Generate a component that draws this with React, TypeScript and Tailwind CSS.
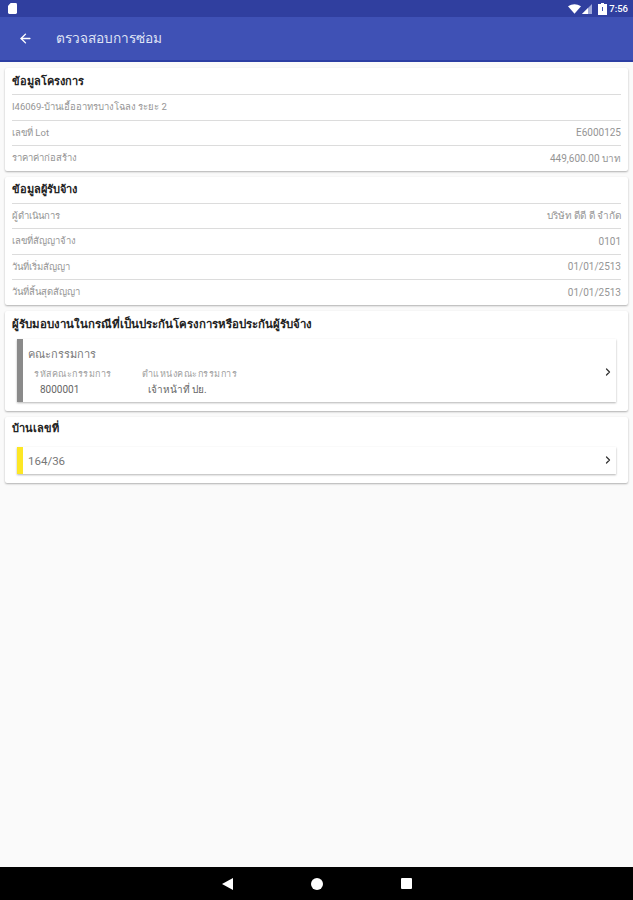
import React from "react";
import { ArrowLeft, ChevronRight } from "lucide-react";

const Row = ({ label, value }: { label: string; value?: string }) => (
  <div className="h-[25.5px] mx-[7px] flex items-center justify-between border-t border-[#dcdcdc] text-[9.5px] text-[#959595]">
    <span>{label}</span>
    {value && <span className="text-[10px]">{value}</span>}
  </div>
);

const Card = ({ title, rows }: { title: string; rows: { label: string; value?: string }[] }) => (
  <section className="mx-[5px] bg-white rounded-[2px] shadow-[0_1px_2px_rgba(0,0,0,0.3)]">
    <h2 className="h-[26px] pt-[2px] px-[7px] flex items-center text-[11px] font-bold text-[#222]">{title}</h2>
    {rows.map((r, idx) => (
      <Row key={idx} label={r.label} value={r.value} />
    ))}
  </section>
);

const App = () => {
  return (
    <div className="w-[633px] h-[900px] flex flex-col bg-[#fafafa] font-['Roboto','Noto_Sans',sans-serif] overflow-hidden">
      <div className="h-[17px] flex-none bg-[#303f9f] flex items-center justify-between pl-2 pr-[5px] text-white">
        <svg viewBox="0 0 10 12" className="w-[9px] h-[11px]" fill="currentColor">
          <path d="M3 0h5.5A1.5 1.5 0 0 1 10 1.5v9A1.5 1.5 0 0 1 8.5 12h-7A1.5 1.5 0 0 1 0 10.5V3z" />
        </svg>
        <div className="flex items-center">
          <svg viewBox="0 0 14 10" className="w-[13px] h-[10px]" fill="currentColor">
            <path d="M0 2 Q7 -2 14 2 L7 10z" />
          </svg>
          <svg viewBox="0 0 10 10" className="w-[10px] h-[10px] ml-[1px] mr-[6px]">
            <path fill="#9fa8da" d="M10 0v10H0z" />
            <path fill="#fff" d="M6 4v6H0z" />
          </svg>
          <svg viewBox="0 0 9 12" className="w-[9px] h-[12px] mr-[2px]">
            <path fill="#fff" d="M3 0h3v1h3v11H0V1h3z" />
            <path fill="#3f51b5" d="M4 4h1v4H4z" />
          </svg>
          <span className="text-[9.5px] font-medium leading-none">7:56</span>
        </div>
      </div>

      <header className="h-[45px] flex-none bg-[#3f51b5] border-b-2 border-[#2c3ea3] flex items-center text-white">
        <ArrowLeft className="w-[15px] h-[15px] ml-[18px]" strokeWidth={2.25} />
        <h1 className="ml-[23px] text-[13.7px] font-medium text-[#dfe3f5]">ตรวจสอบการซ่อม</h1>
      </header>

      <main className="flex-1 flex flex-col gap-[6px] pt-[6px]">
        <Card
          title="ข้อมูลโครงการ"
          rows={[
            { label: "I46069-บ้านเอื้ออาทรบางโฉลง ระยะ 2" },
            { label: "เลขที่ Lot", value: "E6000125" },
            { label: "ราคาค่าก่อสร้าง", value: "449,600.00 บาท" },
          ]}
        />
        <Card
          title="ข้อมูลผู้รับจ้าง"
          rows={[
            { label: "ผู้ดำเนินการ", value: "บริษัท ดีดี ดี จำกัด" },
            { label: "เลขที่สัญญาจ้าง", value: "0101" },
            { label: "วันที่เริ่มสัญญา", value: "01/01/2513" },
            { label: "วันที่สิ้นสุดสัญญา", value: "01/01/2513" },
          ]}
        />

        <section className="mx-[5px] h-[100px] bg-white rounded-[2px] shadow-[0_1px_2px_rgba(0,0,0,0.3)] pl-[7px] pr-3 pt-[6px]">
          <h2 className="h-[17px] flex items-center text-[11.4px] font-bold text-[#222]">
            ผู้รับมอบงานในกรณีที่เป็นประกันโครงการหรือประกันผู้รับจ้าง
          </h2>
          <div className="ml-[5px] mt-[5px] h-[63px] pt-[3px] border-l-[6px] border-[#8a8a8a] shadow-[0_1px_2px_rgba(0,0,0,0.3)] flex items-center justify-between pr-[2px] pl-[5px]">
            <div>
              <p className="text-[11px] leading-[14px] text-[#777]">คณะกรรมการ</p>
              <div className="mt-[7px] flex gap-[30px] pl-[6px] text-[9px] tracking-[0.5px] leading-[11px] text-[#a0a0a0]">
                <div>
                  <p>รหัสคณะกรรมการ</p>
                  <p className="mt-[4px] pl-[6px] text-[10px] tracking-normal text-[#666]">8000001</p>
                </div>
                <div>
                  <p>ตำแหน่งคณะกรรมการ</p>
                  <p className="mt-[4px] pl-[6px] text-[10px] tracking-normal text-[#666]">เจ้าหน้าที่ ปย.</p>
                </div>
              </div>
            </div>
            <ChevronRight className="w-[12px] h-[12px] text-[#333]" strokeWidth={2.5} />
          </div>
        </section>

        <section className="mx-[5px] h-[66px] bg-white rounded-[2px] shadow-[0_1px_2px_rgba(0,0,0,0.3)] pl-[7px] pr-3 pt-[4px]">
          <h2 className="h-[17px] flex items-center text-[11px] font-bold text-[#222]">บ้านเลขที่</h2>
          <div className="ml-[5px] mt-[9px] h-[27px] border-l-[6px] border-[#fde725] shadow-[0_1px_2px_rgba(0,0,0,0.3)] flex items-center justify-between pr-[2px] pl-[5px]">
            <p className="pt-[3px] text-[11.5px] text-[#777]">164/36</p>
            <ChevronRight className="w-[12px] h-[12px] text-[#333]" strokeWidth={2.5} />
          </div>
        </section>
      </main>

      <nav className="h-[33px] flex-none bg-black flex items-center justify-center gap-[78px]">
        <svg viewBox="0 0 11 12" className="w-[11px] h-[12px]" fill="#fff">
          <path d="M11 0v12L0 6z" />
        </svg>
        <span className="w-[12px] h-[12px] rounded-full bg-white" />
        <span className="w-[11px] h-[11px] bg-white rounded-[1px]" />
      </nav>
    </div>
  );
};

export default App;
